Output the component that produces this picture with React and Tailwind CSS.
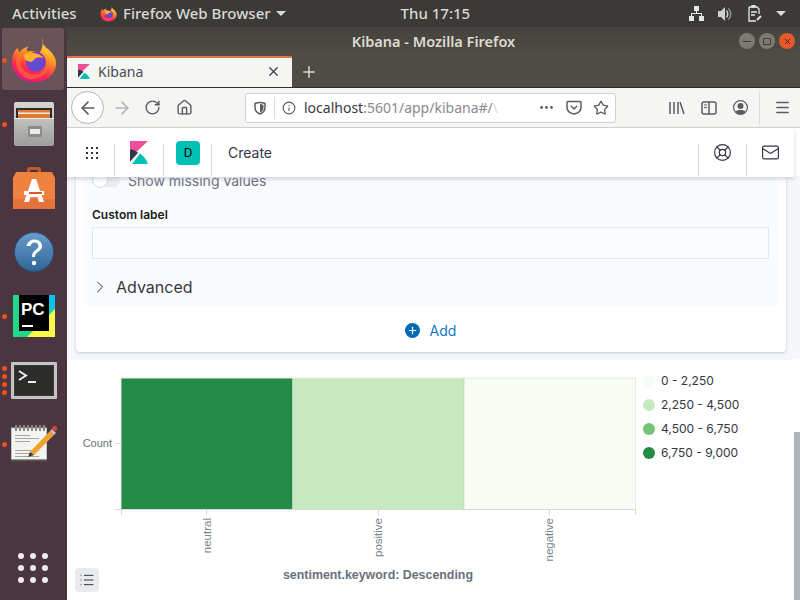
import React from "react";
import { X, Plus, ArrowLeft, ArrowRight, RotateCw, Home, Info, Ellipsis, Star, Menu, ChevronRight, LifeBuoy, Mail, List } from "lucide-react";

const ubuntu = "font-['Noto_Sans',sans-serif]";
const inter = "font-['Inter',sans-serif]";

const FirefoxIcon = ({ size = 48, id = "a" }) => (
  <svg width={size} height={size} viewBox="0 0 48 48">
    <defs>
      <linearGradient id={`ffBody${id}`} x1="0.75" y1="0" x2="0.35" y2="1">
        <stop offset="0" stopColor="#ffe14a" />
        <stop offset="0.4" stopColor="#ff9a20" />
        <stop offset="0.75" stopColor="#f8284f" />
        <stop offset="1" stopColor="#e31587" />
      </linearGradient>
      <radialGradient id={`ffGlobe${id}`} cx="0.5" cy="0.65" r="0.65">
        <stop offset="0" stopColor="#4f55d8" />
        <stop offset="1" stopColor="#9a2fc4" />
      </radialGradient>
    </defs>
    <path d="M33 1c-1 5 1 8 5 11 6 5 9 10 9 15 0 12-10 20-23 20S1 38 1 26C1 20 3 15 7 11c0 2 1 4 2 5 2-3 5-5 9-6-2 3-2 4-1 5 5-1 9 0 12 3 3-4 5-10 4-17z" fill={`url(#ffBody${id})`} />
    <path d="M6 21c2-5 6-7 10-7-1 2-2 3-2 4-3 2-4 5-4 8 0 8 7 13 15 13 7 0 12-4 14-10-1 9-8 15-17 15C12 44 3 33 6 21z" fill="#ff7b28" opacity="0.55" />
    <circle cx="26" cy="26" r="10.500" fill={`url(#ffGlobe${id})`} />
    <path d="M13 19c4-3 8-3 12-2 4 1 7 2 9 5-3-1-6-1-8 0-2 1-2 3-5 4-3 0-7-2-8-7z" fill="#ffb32b" />
    <path d="M36 13c3 3 5 7 5 12 0-5-3-8-7-11z" fill="#ffd02e" />
  </svg>
);

const FilesIcon = () => (
  <svg width="40" height="44" viewBox="0 0 40 44">
    <defs>
      <linearGradient id="cabinet" x1="0" y1="0" x2="0" y2="1">
        <stop offset="0" stopColor="#d6d6d4" />
        <stop offset="1" stopColor="#9d9d9b" />
      </linearGradient>
    </defs>
    <rect x="0" y="0" width="40" height="44" rx="2" fill="url(#cabinet)" />
    <rect x="2" y="6" width="36" height="10" fill="#2d2b28" />
    <rect x="4" y="8" width="32" height="8" fill="#e07a32" />
    <rect x="4" y="10.500" width="32" height="1.500" fill="#f4efe6" />
    <rect x="0" y="16" width="40" height="1" fill="#ececea" />
    <rect x="14" y="24" width="14" height="11" rx="1" fill="#8c8c8a" />
    <rect x="16" y="27" width="10" height="5" fill="#ececea" />
  </svg>
);

const StoreIcon = () => (
  <svg width="42" height="44" viewBox="0 0 42 44">
    <path d="M14 10V4q0-3 3-3h8q3 0 3 3v6h-3V5q0-1-1-1h-6q-1 0-1 1v5z" fill="#c2592a" />
    <path d="M3 6h36l3 6v31H0V12z" fill="#f0823f" />
    <rect x="0" y="33" width="42" height="10" fill="#e3733a" />
    <path d="M19 13h4l8 23h-5l-1.500-5h-7L16 36h-5z" fill="#fff" />
    <rect x="11" y="25" width="20" height="4" fill="#fff" />
    <rect x="16" y="26" width="13" height="2" fill="#dd5a2c" />
  </svg>
);

const HelpIcon = () => (
  <svg width="40" height="40" viewBox="0 0 40 40">
    <defs>
      <linearGradient id="helpBg" x1="0" y1="0" x2="0" y2="1">
        <stop offset="0" stopColor="#6a9ccb" />
        <stop offset="1" stopColor="#2f6596" />
      </linearGradient>
    </defs>
    <circle cx="20" cy="20" r="19.500" fill="url(#helpBg)" stroke="#26547f" />
    <path d="M12.500 14c1-4 4-6.500 8-6.500 4.500 0 7.500 3 7.500 6.500 0 3-2 4.500-4 6-2 1.300-3 2.500-3 5h-3c0-3.500 1-5 3.500-7 2-1.500 3-2.500 3-4 0-2-1.600-3.500-4-3.500-2 0-3.500 1.200-4 3.500z" fill="#fff" />
    <circle cx="20" cy="31" r="2.200" fill="#fff" />
  </svg>
);

const PyCharmIcon = () => (
  <svg width="42" height="42" viewBox="0 0 42 42">
    <defs>
      <linearGradient id="pcBg" x1="0" y1="1" x2="1" y2="0">
        <stop offset="0" stopColor="#21d789" />
        <stop offset="0.5" stopColor="#21d789" />
        <stop offset="1" stopColor="#07c3f2" />
      </linearGradient>
    </defs>
    <rect width="42" height="42" fill="url(#pcBg)" />
    <path d="M42 14v28H14z" fill="#fcf84a" />
    <path d="M24 0h18v14z" fill="#07c3f2" />
    <rect x="6" y="0" width="30" height="36" fill="#000" />
    <rect x="9" y="30" width="11" height="2" fill="#fff" />
    <text x="8" y="20" fill="#fff" fontSize="17" fontWeight="700" fontFamily="Liberation Sans, sans-serif">PC</text>
  </svg>
);

const TerminalIcon = () => (
  <svg width="46" height="37" viewBox="0 0 46 37">
    <rect width="46" height="37" rx="1" fill="#c4c4c2" />
    <rect x="3" y="3" width="40" height="31" fill="#3a3a38" />
    <rect x="4" y="4" width="38" height="29" fill="#2c2c2a" />
    <path d="M8 9l7 4.500-7 4.500" fill="none" stroke="#eee" strokeWidth="2" />
    <rect x="17" y="19" width="8" height="2" fill="#eee" />
  </svg>
);

const NotepadIcon = () => (
  <svg width="46" height="38" viewBox="0 0 46 38">
    <rect x="0.500" y="3" width="35" height="32" fill="#f3f3ef" stroke="#c2c2be" />
    <rect x="0" y="34.500" width="36" height="2" fill="#55524e" />
    {[4, 8, 12, 16, 20, 24, 28, 32].map((x) => (
      <rect key={x} x={x} y="0" width="2" height="6" fill="#8a8882" />
    ))}
    {[10, 13, 16, 25, 28, 31].map((y) => (
      <rect key={y} x="4" y={y} width={y % 2 ? 24 : 15} height="1" fill="#a5a5a0" />
    ))}
    <path d="M19 27L39 6l4 4-20 20z" fill="#f0a22e" />
    <path d="M19 27l-2 5 6-2z" fill="#3a3a38" />
    <path d="M39 6l2-2 4 4-2 2z" fill="#c9c4bd" />
    <circle cx="43.500" cy="3.500" r="2.500" fill="#d8423d" />
  </svg>
);

const KibanaLogo = ({ size = 20 }) => (
  <svg width={size} height={size * 1.3} viewBox="0 0 20 26">
    <path d="M0 0h20L0 19z" fill="#f04e98" />
    <path d="M0 9.500 Q4 9 9 13 L0 23z" fill="#343741" />
    <path d="M2 26L11 14q7 5 9 12z" fill="#00bfb3" />
  </svg>
);

const NetworkIcon = () => (
  <svg width="15" height="15" viewBox="0 0 15 15" fill="#e6e6e3">
    <rect x="5" y="0" width="5" height="5" />
    <rect x="0" y="10" width="5" height="5" />
    <rect x="10" y="10" width="5" height="5" />
    <path d="M7 5h1v2h5v3h-1V8H3v2H2V7h5z" />
  </svg>
);

const SoundIcon = () => (
  <svg width="16" height="14" viewBox="0 0 16 14" fill="#cfcfcb">
    <path d="M0 4h3l4-4v14l-4-4H0z" />
    <path d="M9 3q3 4 0 8l-1-1q2-3 0-6z" />
    <path d="M11 1q5 6 0 12l-1-1q4-5 0-10z" opacity="0.6" />
  </svg>
);

const PowerIcon = () => (
  <svg width="14" height="17" viewBox="0 0 14 17" fill="none" stroke="#e6e6e3" strokeWidth="1.300">
    <path d="M1 2h8l2 2v5M1 2v14h7" />
    <rect x="4" y="0.500" width="3" height="1.500" fill="#e6e6e3" />
    <path d="M3 7h6M3 10h4" />
    <path d="M9 15l4-4" strokeWidth="2" />
  </svg>
);

const ShieldIcon = () => (
  <svg width="14" height="14" viewBox="0 0 14 14" fill="none" stroke="#5c5c61" strokeWidth="1.500">
    <path d="M2 2.500q5-2 10 0v4q0 4.500-5 6.500-5-2-5-6.500z" />
    <path d="M7 3v8.500q3.500-1.500 3.500-5V3.800z" fill="#5c5c61" stroke="none" />
  </svg>
);

const PocketIcon = () => (
  <svg width="16" height="15" viewBox="0 0 16 15" fill="none" stroke="#5c5c61" strokeWidth="1.500">
    <path d="M2 1.500h12q1 0 1 1V7q0 6-7 7-7-1-7-7V2.500q0-1 1-1z" />
    <path d="M5 6l3 3 3-3" />
  </svg>
);

const LibraryIcon = () => (
  <svg width="16" height="14" viewBox="0 0 16 14" stroke="#5c5c61" strokeWidth="1.500">
    <path d="M1 1v12M5 1v12M9 1v12M11 1l4 12" />
  </svg>
);

const SidebarIcon = () => (
  <svg width="16" height="14" viewBox="0 0 16 14" fill="none" stroke="#5c5c61" strokeWidth="1.500">
    <rect x="1" y="1" width="14" height="12" rx="2" />
    <path d="M8 1v12" />
    <path d="M3 4h3M3 6.500h3" strokeWidth="1" />
  </svg>
);

const AccountIcon = () => (
  <svg width="15" height="15" viewBox="0 0 15 15" fill="#5c5c61">
    <path d="M7.500 0a7.500 7.500 0 1 0 0 15 7.500 7.500 0 0 0 0-15zm0 1.300a6.200 6.200 0 0 1 4.800 10.100C11 10.300 9.400 10 7.500 10s-3.500.3-4.800 1.400A6.200 6.200 0 0 1 7.500 1.300z" />
    <circle cx="7.500" cy="6" r="3" />
  </svg>
);

const DockItem = ({ children, dots = 0, active = false }) => (
  <div className="relative flex h-[64px] w-[67px] items-center justify-center">
    {active && <div className="absolute left-[2px] top-0 h-[62px] w-[62px] rounded-[3px] bg-[#6b5459]" />}
    {dots > 0 && (
      <div className="absolute left-[2px] top-0 flex h-full flex-col justify-center gap-[3px]">
        {Array.from({ length: dots }).map((_, i) => (
          <span key={i} className="h-[5px] w-[5px] rounded-full bg-[#e9541f]" />
        ))}
      </div>
    )}
    <div className="relative flex">{children}</div>
  </div>
);

const TopBar = () => (
  <div className={`flex h-[27px] shrink-0 items-center bg-[#3b3a36] text-[15px] font-medium text-[#d9d9d5] ${ubuntu}`}>
    <span className="ml-[12px] w-[88px]">Activities</span>
    <FirefoxIcon size={17} id="top" />
    <span className="ml-[6px]">Firefox Web Browser</span>
    <span className="ml-[5px] h-0 w-0 border-x-[5px] border-t-[5px] border-x-transparent border-t-[#d9d9d5]" />
    <span className="ml-[115px]">Thu 17:15</span>
    <div className="ml-auto mr-[14px] flex items-center gap-[14px]">
      <NetworkIcon />
      <SoundIcon />
      <PowerIcon />
      <span className="h-0 w-0 border-x-[5px] border-t-[5px] border-x-transparent border-t-[#d9d9d5]" />
    </div>
  </div>
);

const Dock = () => (
  <div className="flex h-full w-[67px] shrink-0 flex-col bg-[#4b3540]">
    <div className="pt-px">
      <DockItem dots={1} active>
        <FirefoxIcon size={46} id="dock" />
      </DockItem>
      <DockItem dots={1}>
        <FilesIcon />
      </DockItem>
      <DockItem>
        <StoreIcon />
      </DockItem>
      <DockItem>
        <HelpIcon />
      </DockItem>
      <DockItem dots={1}>
        <PyCharmIcon />
      </DockItem>
      <DockItem dots={4}>
        <TerminalIcon />
      </DockItem>
      <DockItem dots={1}>
        <NotepadIcon />
      </DockItem>
    </div>
    <div className="mt-auto mb-[17px] ml-[18px] grid w-[30px] grid-cols-3 gap-x-[6px] gap-y-[6px]">
      {Array.from({ length: 9 }).map((_, i) => (
        <span key={i} className="h-[6px] w-[6px] rounded-full bg-[#ececec]" />
      ))}
    </div>
  </div>
);

const BrowserChrome = () => (
  <>
    <div className="relative flex h-[29px] shrink-0 items-center justify-center bg-gradient-to-b from-[#45433e] to-[#4f4c45]">
      <span className={`text-[14.5px] font-semibold text-[#dfdbd2] ${ubuntu}`}>Kibana - Mozilla Firefox</span>
      <div className="absolute right-[5px] top-[6px] flex gap-[4px]">
        <span className="flex h-[16px] w-[16px] items-center justify-center rounded-full bg-[#7c7a74]">
          <span className="h-px w-[8px] bg-[#3d3c38]" />
        </span>
        <span className="flex h-[16px] w-[16px] items-center justify-center rounded-full bg-[#7c7a74]">
          <span className="h-[7px] w-[8px] rounded-[1px] border border-[#3d3c38]" />
        </span>
        <span className="flex h-[16px] w-[16px] items-center justify-center rounded-full bg-[#e9582a]">
          <X size={9} strokeWidth={2.5} color="#40241a" />
        </span>
      </div>
    </div>
    <div className="flex h-[32px] shrink-0 items-stretch border-b border-[#2f2e2b] bg-[#4f4c45]">
      <div className="flex w-[225px] items-center border-t-[2px] border-[#e8704a] bg-[#f5f5f4] pb-[2px] pl-[11px] pr-[11px]">
        <KibanaLogo size={12} />
        <span className={`ml-[8px] text-[14px] text-[#4a4a4f] ${ubuntu}`}>Kibana</span>
        <X size={15} className="ml-auto text-[#3f3f43]" />
      </div>
      <div className="flex w-[33px] items-center justify-center">
        <Plus size={18} className="text-[#d9d8d3]" />
      </div>
    </div>
    <div className="flex h-[40px] shrink-0 items-center border-b border-[#d0cfcc] bg-[#f5f5f4] pl-[4px] text-[#5c5c61]">
      <div className="flex h-[33px] w-[33px] items-center justify-center rounded-full border border-[#b3b3b3] bg-white">
        <ArrowLeft size={20} />
      </div>
      <ArrowRight size={20} className="ml-[8px] text-[#b5b5b5]" />
      <RotateCw size={17} className="ml-[12px]" />
      <Home size={17} className="ml-[15px]" />
      <div className="ml-[52px] flex h-[30px] w-[371px] items-center rounded-[3px] border border-[#d1d1d1] bg-white pl-[7px] pr-[6px]">
        <ShieldIcon />
        <span className="ml-[7px] h-[22px] w-px bg-[#dcdcdc]" />
        <Info size={14} className="ml-[7px]" />
        <span className={`ml-[8px] text-[14px] text-[#3a3a3e] ${ubuntu}`}>
          localhost<span className="text-[#8a8a8e]">:5601/app/kibana#/</span>
          <span className="text-[#dcdcde]">\</span>
        </span>
        <div className="ml-auto flex items-center gap-[11px]">
          <Ellipsis size={17} />
          <PocketIcon />
          <Star size={16} />
        </div>
      </div>
      <div className="ml-[53px] flex items-center gap-[16px]">
        <LibraryIcon />
        <SidebarIcon />
        <AccountIcon />
      </div>
      <span className="ml-[11px] h-[32px] w-px bg-[#dcdcdc]" />
      <Menu size={17} className="ml-[14px]" />
    </div>
  </>
);

const KibanaHeader = () => (
  <div className={`relative z-10 flex h-[49px] shrink-0 items-center bg-white shadow-[0_2px_4px_rgba(152,162,179,0.45)] ${inter}`}>
    <div className="flex h-full w-[48px] items-center justify-center">
      <div className="grid grid-cols-3 gap-[3px] pl-[1px]">
        {Array.from({ length: 9 }).map((_, i) => (
          <span key={i} className="h-[2px] w-[2px] bg-[#343741]" />
        ))}
      </div>
    </div>
    <div className="flex h-full w-[48px] items-center justify-center">
      <KibanaLogo size={18} />
    </div>
    <div className="flex h-full w-[48px] items-center justify-center pl-[2px]">
      <span className="flex h-[24px] w-[24px] items-center justify-center rounded-[4px] bg-[#00bfb3] text-[12px] text-black">D</span>
    </div>
    <span className="ml-[17px] text-[14px] text-[#343741]">Create</span>
    <div className="ml-auto flex h-full">
      <div className="flex h-full w-[48px] items-center justify-center">
        <LifeBuoy size={19} strokeWidth={1.5} className="text-[#343741]" />
      </div>
      <div className="flex h-full w-[48px] items-center justify-center">
        <Mail size={19} strokeWidth={1.5} className="text-[#343741]" />
      </div>
    </div>
    <span className="absolute left-[47px] top-[16px] h-[32px] w-px bg-[#d3dae6]" />
    <span className="absolute left-[96px] top-[16px] h-[32px] w-px bg-[#d3dae6]" />
    <span className="absolute left-[144px] top-[16px] h-[32px] w-px bg-[#d3dae6]" />
    <span className="absolute left-[631px] top-[16px] h-[32px] w-px bg-[#d3dae6]" />
    <span className="absolute left-[679px] top-[16px] h-[32px] w-px bg-[#d3dae6]" />
  </div>
);

const EditorPanel = () => (
  <div className={`-mt-[10px] bg-[#f5f7fa] pb-[8px] pl-[9px] pr-[8px] ${inter}`}>
    <div className="rounded-b-[4px] bg-white pl-[8px] pr-[9px] shadow-[0_1px_3px_rgba(152,162,179,0.55)]">
      <div className="rounded-b-[4px] bg-[#fafbfd] pb-[2px] pl-[8px] pr-[8px]">
        <div className="flex h-[24px] items-center pt-[2px]">
          <span className="relative h-[14px] w-[28px] rounded-full bg-[#e7ebf2]">
            <span className="absolute left-0 top-[-1px] h-[16px] w-[16px] rounded-full border border-[#d3dae6] bg-white" />
          </span>
          <span className="ml-[8px] text-[14px] text-[#69707d]">Show missing values</span>
        </div>
        <div className="mt-[16px] text-[12px] font-semibold leading-[16px] text-[#1a1c21]">Custom label</div>
        <div className="mt-[4px] h-[32px] border border-[#e3e7ef] bg-[#fbfcfd]" />
        <div className="mt-[11px] flex h-[34px] items-center">
          <ChevronRight size={20} strokeWidth={1.2} className="-ml-[2px] text-[#343741]" />
          <span className="ml-[6px] text-[16px] text-[#343741]">Advanced</span>
        </div>
      </div>
      <div className="flex h-[46px] items-center justify-center pt-[3px]">
        <span className="flex h-[15px] w-[15px] items-center justify-center rounded-full bg-[#006bb4]">
          <Plus size={11} strokeWidth={2.5} className="text-white" />
        </span>
        <span className="ml-[10px] text-[14px] text-[#1078c4]">Add</span>
      </div>
    </div>
  </div>
);

const legend = [
  { label: "0 - 2,250", color: "bg-[#f7fcf5]" },
  { label: "2,250 - 4,500", color: "bg-[#c7e9c0]" },
  { label: "4,500 - 6,750", color: "bg-[#74c476]" },
  { label: "6,750 - 9,000", color: "bg-[#238b45]" },
];

const Heatmap = () => (
  <svg width="570" height="230" viewBox="0 0 570 230" className="block shrink-0">
    <rect x="54" y="18" width="171.500" height="131" fill="#238b45" />
    <rect x="225.500" y="18" width="171.500" height="131" fill="#c7e9c0" />
    <rect x="397" y="18" width="171.500" height="131" fill="#f7fcf5" />
    <path d="M54 18h514.500v131" fill="none" stroke="#e6ebe3" />
    <path d="M225.500 18v131M397 18v131" stroke="#b9cdb4" strokeOpacity="0.6" />
    <path d="M54 18v131" stroke="#e6e6e6" />
    <path d="M48 149.500h521M48 83.500h6M54.500 149v6M139.500 149v6M311.500 149v6M482.500 149v6M568.500 149v6" stroke="#d9d9d9" fill="none" />
    <text x="45" y="87" textAnchor="end" fontSize="11" fill="#69707d" fontFamily="Liberation Sans, sans-serif">Count</text>
    {[
      [144, "neutral"],
      [315, "positive"],
      [486, "negative"],
    ].map(([x, t]) => (
      <text key={t} transform={`translate(${x} 158) rotate(-90)`} textAnchor="end" fontSize="11.500" fill="#7d838e" fontFamily="Liberation Sans, sans-serif">
        {t}
      </text>
    ))}
    <text x="311" y="219" textAnchor="middle" fontSize="12.400" fontWeight="700" fill="#69707d" fontFamily="Liberation Sans, sans-serif">sentiment.keyword: Descending</text>
  </svg>
);

const ChartArea = () => (
  <div className={`relative flex flex-1 bg-white ${inter}`}>
    <Heatmap />
    <div className="ml-[6px] flex flex-col gap-[4px] pt-[11px]">
      {legend.map((l) => (
        <div key={l.label} className="flex h-[20px] items-center">
          <span className={`h-[12px] w-[12px] rounded-full ${l.color}`} />
          <span className="ml-[6px] text-[12px] text-[#343741]">{l.label}</span>
        </div>
      ))}
    </div>
    <div className="absolute left-[8px] top-[208px] flex h-[24px] w-[24px] items-center justify-center rounded-[4px] bg-[#e9ebef]">
      <List size={16} strokeWidth={1.5} className="text-[#343741]" />
    </div>
  </div>
);

const App = () => (
  <div className="flex h-[600px] w-[800px] flex-col overflow-hidden bg-[#4b3540]">
    <TopBar />
    <div className="flex min-h-0 flex-1">
      <Dock />
      <div className="flex min-w-0 flex-1 flex-col">
        <BrowserChrome />
        <div className="flex min-h-0 flex-1 overflow-hidden bg-white">
          <div className="flex min-w-0 flex-1 flex-col">
            <KibanaHeader />
            <EditorPanel />
            <ChartArea />
          </div>
          <div className="flex w-[6px] shrink-0 flex-col bg-white">
            <div className="h-[48px]" />
            <div className="h-[183px] bg-[#f5f7fa]" />
            <div className="h-[73px]" />
            <div className="flex-1 bg-[#b0b3b8]" />
          </div>
        </div>
      </div>
    </div>
  </div>
);

export default App;
